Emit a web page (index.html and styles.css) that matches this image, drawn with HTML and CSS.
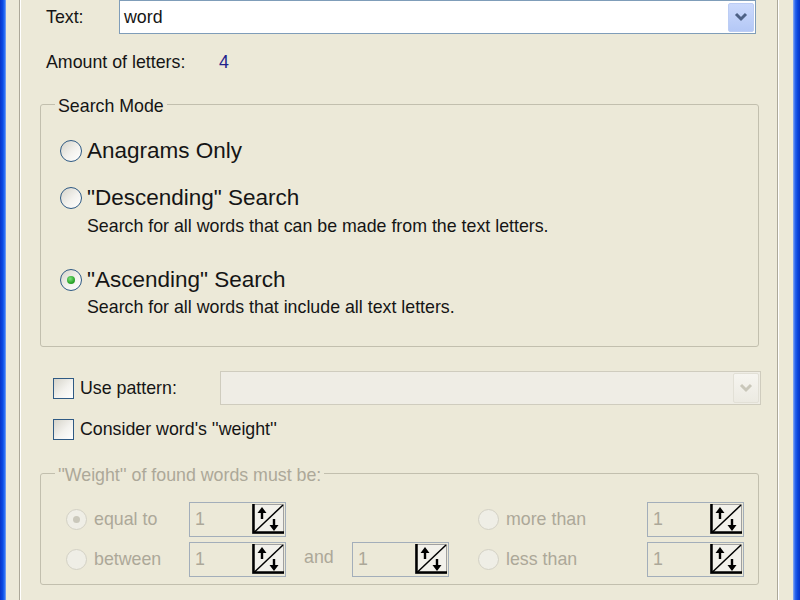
FILE: index.html
```html
<!DOCTYPE html>
<html>
<head>
<meta charset="utf-8">
<title>Search</title>
<link rel="stylesheet" href="styles.css">
</head>
<body>
<div class="window">
  <div class="frame-left"></div>
  <div class="client">
    <div class="panel">
      <div class="row-text">
        <span class="lbl-text">Text:</span>
        <div class="combo">
          <span class="combo-value">word</span>
          <span class="combo-btn"><svg width="14" height="10" viewBox="0 0 14 10"><polyline points="2,2 7,7 12,2" fill="none" stroke="#4D6185" stroke-width="3"/></svg></span>
        </div>
      </div>
      <div class="row-amount">
        <span class="lbl-amount">Amount of letters:</span>
        <span class="amount">4</span>
      </div>
      <fieldset class="group">
        <legend>Search Mode</legend>
        <div class="mode-body">
          <div class="opt"><span class="radio"></span><span class="opt-title">Anagrams Only</span></div>
          <div class="opt opt-2"><span class="radio"></span><span class="opt-title">"Descending" Search</span></div>
          <div class="opt-desc desc-2">Search for all words that can be made from the text letters.</div>
          <div class="opt opt-3"><span class="radio checked"></span><span class="opt-title">"Ascending" Search</span></div>
          <div class="opt-desc desc-3">Search for all words that include all text letters.</div>
        </div>
      </fieldset>
      <div class="row-pattern">
        <label class="check-item check-pattern"><span class="checkbox"></span><span class="check-label">Use pattern:</span></label>
        <div class="combo combo-disabled">
          <span class="combo-value"></span>
          <span class="combo-btn"><svg width="14" height="10" viewBox="0 0 14 10"><polyline points="2,2 7,7 12,2" fill="none" stroke="#C9C7BA" stroke-width="3"/></svg></span>
        </div>
      </div>
      <div class="row-weight">
        <label class="check-item"><span class="checkbox"></span><span class="check-label">Consider word's ''weight''</span></label>
      </div>
      <fieldset class="group group-disabled">
        <legend>''Weight'' of found words must be:</legend>
        <div class="weight-grid">
          <div class="w-opt c1"><span class="radio radio-dis checked"></span><span>equal to</span></div>
          <div class="spin c2"><span class="spin-val">1</span><svg class="spin-btn" width="32" height="30" viewBox="0 0 32 30"><rect x="0.5" y="0.5" width="31" height="29" fill="#F2F1EB" stroke="#A0A0A0"/><path d="M1.5 0 V28.5 H32" fill="none" stroke="#000" stroke-width="2.5"/><path d="M2.5 28 L31 1" stroke="#000" stroke-width="1.5"/><path d="M10 3 L5.5 9 H8.8 V15 H11.2 V9 H14.5 Z" fill="#000"/><path d="M22 27 L17.5 21 H20.8 V15 H23.2 V21 H26.5 Z" fill="#000"/></svg></div>
          <div class="w-opt c6"><span class="radio radio-dis"></span><span>more than</span></div>
          <div class="spin c7"><span class="spin-val">1</span><svg class="spin-btn" width="32" height="30" viewBox="0 0 32 30"><rect x="0.5" y="0.5" width="31" height="29" fill="#F2F1EB" stroke="#A0A0A0"/><path d="M1.5 0 V28.5 H32" fill="none" stroke="#000" stroke-width="2.5"/><path d="M2.5 28 L31 1" stroke="#000" stroke-width="1.5"/><path d="M10 3 L5.5 9 H8.8 V15 H11.2 V9 H14.5 Z" fill="#000"/><path d="M22 27 L17.5 21 H20.8 V15 H23.2 V21 H26.5 Z" fill="#000"/></svg></div>
          <div class="w-opt c1"><span class="radio radio-dis"></span><span>between</span></div>
          <div class="spin c2"><span class="spin-val">1</span><svg class="spin-btn" width="32" height="30" viewBox="0 0 32 30"><rect x="0.5" y="0.5" width="31" height="29" fill="#F2F1EB" stroke="#A0A0A0"/><path d="M1.5 0 V28.5 H32" fill="none" stroke="#000" stroke-width="2.5"/><path d="M2.5 28 L31 1" stroke="#000" stroke-width="1.5"/><path d="M10 3 L5.5 9 H8.8 V15 H11.2 V9 H14.5 Z" fill="#000"/><path d="M22 27 L17.5 21 H20.8 V15 H23.2 V21 H26.5 Z" fill="#000"/></svg></div>
          <div class="and c3">and</div>
          <div class="spin c4"><span class="spin-val">1</span><svg class="spin-btn" width="32" height="30" viewBox="0 0 32 30"><rect x="0.5" y="0.5" width="31" height="29" fill="#F2F1EB" stroke="#A0A0A0"/><path d="M1.5 0 V28.5 H32" fill="none" stroke="#000" stroke-width="2.5"/><path d="M2.5 28 L31 1" stroke="#000" stroke-width="1.5"/><path d="M10 3 L5.5 9 H8.8 V15 H11.2 V9 H14.5 Z" fill="#000"/><path d="M22 27 L17.5 21 H20.8 V15 H23.2 V21 H26.5 Z" fill="#000"/></svg></div>
          <div class="w-opt c6"><span class="radio radio-dis"></span><span>less than</span></div>
          <div class="spin c7"><span class="spin-val">1</span><svg class="spin-btn" width="32" height="30" viewBox="0 0 32 30"><rect x="0.5" y="0.5" width="31" height="29" fill="#F2F1EB" stroke="#A0A0A0"/><path d="M1.5 0 V28.5 H32" fill="none" stroke="#000" stroke-width="2.5"/><path d="M2.5 28 L31 1" stroke="#000" stroke-width="1.5"/><path d="M10 3 L5.5 9 H8.8 V15 H11.2 V9 H14.5 Z" fill="#000"/><path d="M22 27 L17.5 21 H20.8 V15 H23.2 V21 H26.5 Z" fill="#000"/></svg></div>
        </div>
      </fieldset>
    </div>
  </div>
  <div class="frame-right"></div>
</div>
</body>
</html>
```

FILE: styles.css
```css
html, body {
  margin: 0;
  padding: 0;
}
body {
  background: #ECE9D8;
  font-family: "Liberation Sans", Arial, sans-serif;
  font-size: 17.8px;
  color: #151515;
  overflow: hidden;
}
.window {
  display: flex;
  height: 600px;
  overflow: hidden;
}
.frame-left {
  width: 6px;
  flex: none;
  background: linear-gradient(to right, #0733C8, #0A4AE4 45%, #2B6FF3 75%, #86A9F2);
}
.frame-right {
  width: 7px;
  flex: none;
  background: linear-gradient(to right, #90B0F2, #2A66EE 30%, #0A46DD 65%, #0733C4);
}
.client {
  flex: 1;
  padding: 0 14px 0 13px;
}
.panel {
  height: 600px;
  border-left: 1px solid #ACA899;
  border-right: 1px solid #FFFFFF;
  box-shadow: inset 1px 0 #FFFFFF, inset -1px 0 #ACA899;
  box-sizing: border-box;
}

/* Text row */
.row-text {
  display: flex;
  align-items: center;
  height: 34px;
}
.lbl-text {
  margin-left: 26px;
  width: 73px;
  padding-top: 1px;
}
.combo {
  width: 637px;
  height: 34px;
  box-sizing: border-box;
  border: 1px solid #7F9DB9;
  background: #FFFFFF;
  display: flex;
  align-items: center;
  padding-left: 4px;
}
.combo-value {
  flex: 1;
}
.combo-btn {
  width: 26px;
  height: 29px;
  margin-right: 1px;
  box-sizing: border-box;
  border: 1px solid #BCCDF4;
  border-radius: 2px;
  background: linear-gradient(to bottom, #CCDAFC, #B4C8F6);
  display: flex;
  align-items: center;
  justify-content: center;
}

/* Amount row */
.row-amount {
  display: flex;
  align-items: center;
  height: 22px;
  margin-top: 17px;
}
.lbl-amount {
  margin-left: 26px;
  width: 173px;
}
.amount {
  color: #22228C;
}

/* Group boxes */
.group {
  margin: 21px 0 0 20px;
  width: 719px;
  box-sizing: border-box;
  border: 1px solid #C2BFAE;
  border-radius: 3px;
  padding: 0;
  min-width: 0;
}
.group legend {
  margin-left: 14px;
  padding: 0 3px;
  line-height: 24px;
  height: 20px;
}
.mode-body {
  padding: 24px 0 28px 19px;
}
.opt {
  display: flex;
  align-items: center;
  height: 26px;
}
.opt-title {
  font-size: 22.5px;
  margin-left: 5px;
}
.opt-2 { margin-top: 21px; }
.opt-3 { margin-top: 30px; }
.opt-desc {
  margin-left: 27px;
  height: 22px;
  line-height: 22px;
}
.desc-2 { margin-top: 4px; }
.desc-3 { margin-top: 3px; }

/* Radio */
.radio {
  width: 22px;
  height: 22px;
  flex: none;
  box-sizing: border-box;
  border-radius: 50%;
  border: 1.5px solid #2F5A84;
  background: linear-gradient(135deg, #D6D4CA, #F3F2EE 55%, #FFFFFF);
  display: flex;
  align-items: center;
  justify-content: center;
}
.radio.checked::after {
  content: "";
  width: 8px;
  height: 8px;
  border-radius: 50%;
  background: radial-gradient(circle at 40% 35%, #7DE27D, #2DA62D 60%, #1A8A1A);
}
.radio-dis {
  width: 21px;
  height: 21px;
  border: 1px solid #D3D1C5;
  background: #EFEEE6;
}
.radio-dis.checked::after {
  width: 7px;
  height: 7px;
  background: #CAC8BB;
}

/* Checkbox rows */
.row-pattern {
  display: flex;
  align-items: center;
  height: 34px;
  margin-top: 24px;
  padding-left: 33px;
}
.check-item {
  display: flex;
  align-items: center;
}
.check-pattern {
  width: 167px;
}
.checkbox {
  width: 21px;
  height: 21px;
  flex: none;
  box-sizing: border-box;
  border: 1.5px solid #2F5A84;
  background: linear-gradient(135deg, #D6D4CA, #F3F2EE 55%, #FFFFFF);
}
.check-label {
  margin-left: 6px;
}
.combo-disabled {
  width: 541px;
  border-color: #CFCCBE;
  background: #EFEDE5;
}
.combo-disabled .combo-btn {
  width: 26px;
  height: 30px;
  border-color: #E2E0D6;
  background: linear-gradient(to bottom, #F6F5F0, #ECEAE2);
}
.row-weight {
  display: flex;
  align-items: center;
  height: 22px;
  margin-top: 13px;
  padding-left: 33px;
}

/* Weight group */
.group-disabled {
  margin-top: 23px;
  color: #ACA899;
}
.weight-grid {
  display: grid;
  grid-template-columns: 123px 97px 66px 97px 29px 169px 97px;
  grid-template-rows: 34px 34px;
  row-gap: 6px;
  padding: 19px 0 8px 25px;
  align-items: center;
}
.c1 { grid-column: 1; }
.c2 { grid-column: 2; }
.c3 { grid-column: 3; }
.c4 { grid-column: 4; }
.c6 { grid-column: 6; }
.c7 { grid-column: 7; }
.w-opt {
  display: flex;
  align-items: center;
  gap: 7px;
}
.and {
  padding-left: 18px;
  margin-top: -4px;
}
.spin {
  height: 35px;
  box-sizing: border-box;
  border: 1px solid #A3AEBA;
  display: flex;
  align-items: center;
  padding-left: 5px;
}
.spin-val {
  flex: 1;
}
.spin-btn {
  display: block;
  margin-right: 1px;
}
```
